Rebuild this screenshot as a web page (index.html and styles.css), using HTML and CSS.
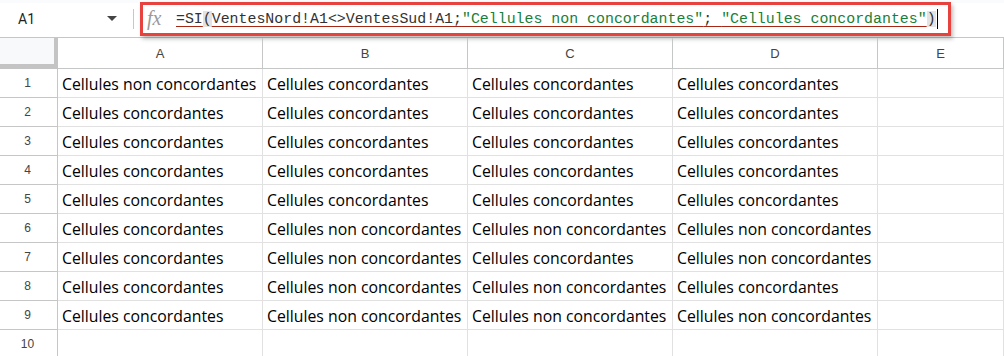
FILE: index.html
```html
<!DOCTYPE html>
<html lang="fr">
<head>
  <meta charset="UTF-8">
  <title>Feuille</title>
  <link rel="stylesheet" href="styles.css">
</head>
<body>

<div class="topbar">
  <div class="namebox">
    <span class="cellref">A1</span>
    <span class="caret"></span>
  </div>
  <div class="sep"></div>
  <div class="formula">
    <span class="fx">fx</span>
    <span class="code"><span class="u">=SI</span><span class="paren">(</span><span class="u">VentesNord!A1&lt;&gt;VentesSud!A1;</span><span class="u str">"Cellules non concordantes"</span><span class="u">; </span><span class="u str">"Cellules concordantes"</span><span class="paren">)</span><span class="cursor"></span></span>
  </div>
</div>

<div class="sheet" id="sheet"></div>

<script>
  const C = 'Cellules concordantes';
  const N = 'Cellules non concordantes';
  const data = [
    [N, C, C, C],
    [C, C, C, C],
    [C, C, C, C],
    [C, C, C, C],
    [C, C, C, C],
    [C, N, N, N],
    [C, N, C, N],
    [C, N, N, C],
    [C, N, N, N],
    ['', '', '', '']
  ];

  const sheet = document.getElementById('sheet');
  let html = '<div class="corner"></div>';
  ['A', 'B', 'C', 'D', 'E'].forEach(l => {
    html += `<div class="colhead">${l}</div>`;
  });
  data.forEach((row, i) => {
    html += `<div class="rowhead">${i + 1}</div>`;
    row.forEach(v => { html += `<div class="cell">${v}</div>`; });
    html += '<div class="cell"></div>';
  });
  sheet.innerHTML = html;
</script>

</body>
</html>
```

FILE: styles.css
```css
body {
  margin: 0;
  background: #fff;
  font-family: Roboto, Arial, sans-serif;
  overflow: hidden;
}

.topbar {
  display: flex;
  align-items: center;
  height: 37px;
  border-bottom: 1px solid #c4c7c5;
  background: linear-gradient(#f9fbfd 0 3px, #fff 3px);
}

.namebox {
  width: 133px;
  display: flex;
  align-items: center;
  box-sizing: border-box;
  padding-left: 18px;
}

.cellref {
  font-size: 14px;
  color: #1f1f1f;
  flex: 1;
}

.caret {
  width: 0;
  height: 0;
  border-left: 5px solid transparent;
  border-right: 5px solid transparent;
  border-top: 5px solid #444;
  margin-right: 16px;
}

.sep {
  width: 1px;
  height: 20px;
  background: #c7c7c7;
}

.formula {
  margin-left: 6px;
  width: 805px;
  height: 28px;
  border: 3px solid #e8423f;
  box-shadow: 2px 3px 4px rgba(0, 0, 0, 0.25);
  display: flex;
  align-items: center;
  background: #fff;
}

.fx {
  font-family: "Liberation Serif", serif;
  font-style: italic;
  font-size: 20px;
  color: #9a9a9a;
  margin-left: 4px;
  width: 29px;
}

.code {
  font-family: "Liberation Mono", monospace;
  font-size: 14.9px;
  color: #333;
  white-space: pre;
  display: flex;
  align-items: center;
  padding-top: 1px;
}

.u {
  text-decoration: underline;
  text-decoration-color: #a52714;
  text-underline-offset: 3px;
}

.str {
  color: #188038;
}

.paren {
  background: #e3e3e3;
}

.cursor {
  width: 1px;
  height: 20px;
  background: #000;
  margin-left: 1px;
}

.sheet {
  display: grid;
  grid-template-columns: 58px 205px 205px 205px 205px 1fr;
  grid-template-rows: 31px repeat(10, 29px);
}

.corner {
  background: #f8f9fa;
  border-right: 4px solid #c4c4c4;
  border-bottom: 5px solid #c4c4c4;
}

.colhead, .rowhead {
  color: #444;
  font-family: "Liberation Sans", Arial, sans-serif;
  display: flex;
  align-items: center;
  justify-content: center;
  border-right: 1px solid #c4c7c5;
  border-bottom: 1px solid #c4c7c5;
}

.colhead {
  font-size: 13px;
  padding-top: 1px;
}

.rowhead {
  font-size: 12px;
  padding-right: 2px;
}

.cell {
  border-right: 1px solid #e1e1e1;
  border-bottom: 1px solid #e1e1e1;
  font-family: "Open Sans", sans-serif;
  font-size: 15.8px;
  color: #000;
  padding-left: 4px;
  padding-top: 2px;
  display: flex;
  align-items: center;
  white-space: nowrap;
  overflow: hidden;
}
```
